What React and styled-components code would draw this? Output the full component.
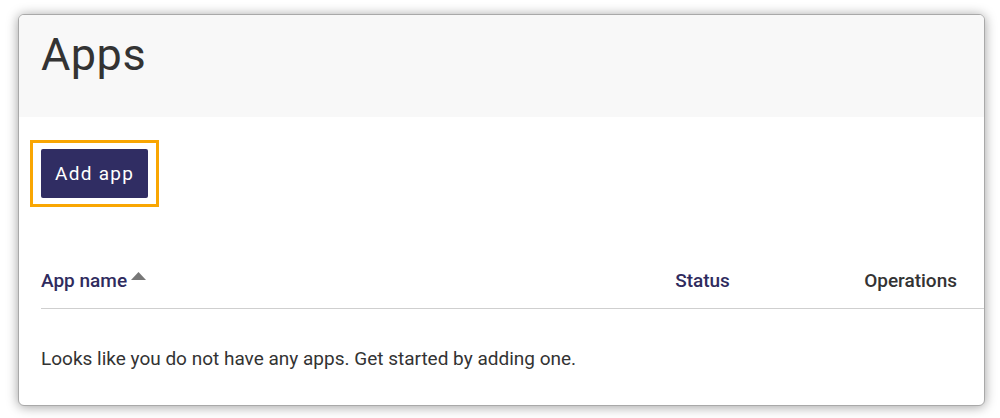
import React from "react";
import styled, { createGlobalStyle } from "styled-components";

const GlobalStyle = createGlobalStyle`
  body {
    margin: 0;
    background: #fff;
    font-family: Roboto, "Liberation Sans", Arial, sans-serif;
    color: #333;
  }
`;

const Page = styled.div`
  padding: 14px 15px 12px 18px;
`;

const Card = styled.div`
  height: 390px;
  border: 1px solid #a9a9a9;
  border-radius: 6px;
  background: #fff;
  box-shadow: 0 1px 12px rgba(0, 0, 0, 0.38);
  overflow: hidden;
`;

const Header = styled.div`
  height: 102px;
  box-sizing: border-box;
  background: #f8f8f8;
  padding: 17px 22px 0;
`;

const Title = styled.h1`
  margin: 0;
  font-size: 45px;
  line-height: 45px;
  font-weight: 400;
  letter-spacing: 0.5px;
  color: #333;
`;

const Content = styled.div`
  padding: 23px 0 0 22px;
`;

const Highlight = styled.div`
  display: inline-block;
  margin-left: -11px;
  padding: 6px 8px;
  border: 3px solid #f9a602;
`;

const Button = styled.button`
  display: block;
  padding: 13px 14px 12px;
  border: none;
  border-radius: 2px;
  background: #302d63;
  color: #fff;
  font-family: inherit;
  font-size: 19px;
  line-height: 24px;
  letter-spacing: 1.3px;
  cursor: pointer;
`;

const Row = styled.div`
  display: grid;
  grid-template-columns: 1fr 189px auto;
  padding-right: 27px;
`;

const HeadRow = styled(Row)`
  margin-top: 62px;
  padding-bottom: 15px;
  border-bottom: 1px solid #cfcfcf;
`;

const HeadCell = styled.div`
  display: flex;
  align-items: flex-start;
  font-size: 19px;
  line-height: 24px;
  font-weight: 500;
  color: ${(p) => (p.$accent ? "#2f2b5e" : "#333")};
`;

const SortIcon = styled.svg`
  margin: 3px 0 0 4px;
`;

const Empty = styled.p`
  margin: 0;
  padding-top: 38px;
  font-size: 19px;
  line-height: 24px;
  color: #333;
`;

export default function App() {
  return (
    <>
      <GlobalStyle />
      <Page>
        <Card>
          <Header>
            <Title>Apps</Title>
          </Header>
          <Content>
            <Highlight>
              <Button>Add app</Button>
            </Highlight>
            <HeadRow>
              <HeadCell $accent>
                App name
                <SortIcon width="15" height="8" viewBox="0 0 15 8">
                  <polygon points="7.5,0 15,8 0,8" fill="#777" />
                </SortIcon>
              </HeadCell>
              <HeadCell $accent>Status</HeadCell>
              <HeadCell>Operations</HeadCell>
            </HeadRow>
            <Empty>Looks like you do not have any apps. Get started by adding one.</Empty>
          </Content>
        </Card>
      </Page>
    </>
  );
}
